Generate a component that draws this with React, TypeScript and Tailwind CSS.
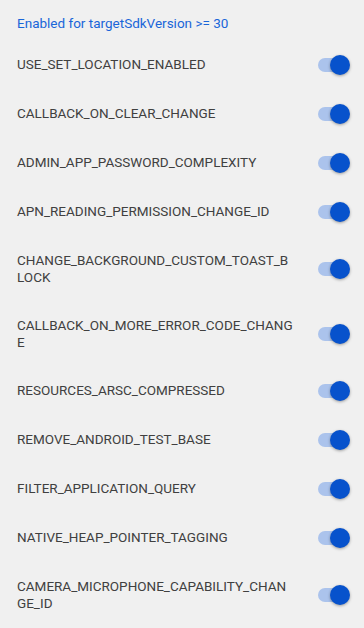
import React from "react";

const items: string[][] = [
  ["USE_SET_LOCATION_ENABLED"],
  ["CALLBACK_ON_CLEAR_CHANGE"],
  ["ADMIN_APP_PASSWORD_COMPLEXITY"],
  ["APN_READING_PERMISSION_CHANGE_ID"],
  ["CHANGE_BACKGROUND_CUSTOM_TOAST_B", "LOCK"],
  ["CALLBACK_ON_MORE_ERROR_CODE_CHANG", "E"],
  ["RESOURCES_ARSC_COMPRESSED"],
  ["REMOVE_ANDROID_TEST_BASE"],
  ["FILTER_APPLICATION_QUERY"],
  ["NATIVE_HEAP_POINTER_TAGGING"],
  ["CAMERA_MICROPHONE_CAPABILITY_CHAN", "GE_ID"],
];

function Toggle() {
  return (
    <div className="relative w-[34px] h-[20px] flex items-center shrink-0">
      <div className="absolute left-[2px] w-[28px] h-[14px] rounded-full bg-[#abc3ec]" />
      <div className="absolute right-[0px] w-[20px] h-[20px] rounded-full bg-[#0752cc] shadow-[0_1px_3px_rgba(0,0,0,0.35)]" />
    </div>
  );
}

export default function App() {
  return (
    <div
      className="w-[364px] h-[628px] overflow-hidden bg-[#f0f0f0]"
      style={{ fontFamily: "Roboto, 'Noto Sans', sans-serif" }}
    >
      <div className="pl-[17px] pt-[13px] h-[40px] text-[13.5px] leading-[20px] text-[#1a66d9]">
        Enabled for targetSdkVersion &gt;= 30
      </div>
      {items.map((lines) => (
        <div
          key={lines.join("")}
          className={
            lines.length > 1
              ? "flex items-center h-[65px] pl-[17px] pr-[14px]"
              : "flex items-center h-[49px] pl-[17px] pr-[14px]"
          }
        >
          <div className="flex-1 text-[13.5px] leading-[17px] text-[#404040] whitespace-nowrap">
            {lines.map((l, i) => (
              <div key={i}>{l}</div>
            ))}
          </div>
          <Toggle />
        </div>
      ))}
    </div>
  );
}
